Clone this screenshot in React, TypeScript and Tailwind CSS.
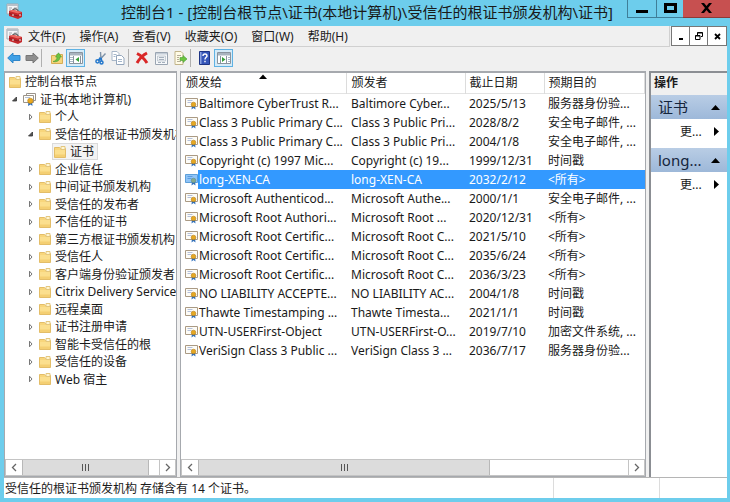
/**
 * Certificate console
 * Three panes: console tree, certificate list and actions.
 */
import type { ReactNode } from 'react';

const MENUS = ['文件(F)', '操作(A)', '查看(V)', '收藏夹(O)', '窗口(W)', '帮助(H)'];

const STORES = ['企业信任', '中间证书颁发机构', '受信任的发布者', '不信任的证书', '第三方根证书颁发机构', '受信任人', '客户端身份验证颁发者', 'Citrix Delivery Services', '远程桌面', '证书注册申请', '智能卡受信任的根', '受信任的设备', 'Web 宿主'];

const CERTS = [
    ['Baltimore CyberTrust R...', 'Baltimore Cyber...', '2025/5/13', '服务器身份验...'],
    ['Class 3 Public Primary C...', 'Class 3 Public Pri...', '2028/8/2', '安全电子邮件, ...'],
    ['Class 3 Public Primary C...', 'Class 3 Public Pri...', '2004/1/8', '安全电子邮件, ...'],
    ['Copyright (c) 1997 Mic...', 'Copyright (c) 19...', '1999/12/31', '时间戳'],
    ['long-XEN-CA', 'long-XEN-CA', '2032/2/12', '<所有>'],
    ['Microsoft Authenticod...', 'Microsoft Authe...', '2000/1/1', '安全电子邮件, ...'],
    ['Microsoft Root Authori...', 'Microsoft Root ...', '2020/12/31', '<所有>'],
    ['Microsoft Root Certific...', 'Microsoft Root C...', '2021/5/10', '<所有>'],
    ['Microsoft Root Certific...', 'Microsoft Root C...', '2035/6/24', '<所有>'],
    ['Microsoft Root Certific...', 'Microsoft Root C...', '2036/3/23', '<所有>'],
    ['NO LIABILITY ACCEPTE...', 'NO LIABILITY AC...', '2004/1/8', '时间戳'],
    ['Thawte Timestamping ...', 'Thawte Timesta...', '2021/1/1', '时间戳'],
    ['UTN-USERFirst-Object', 'UTN-USERFirst-O...', '2019/7/10', '加密文件系统, ...'],
    ['VeriSign Class 3 Public ...', 'VeriSign Class 3 ...', '2036/7/17', '服务器身份验...'],
];
const SELECTED = 4;

function ConsoleIcon() {
    return (
        <svg width="17" height="17" viewBox="0 0 17 17" className="shrink-0">
            <path d="M1 1h11v10H1z" fill="#f4f6f8" stroke="#a3a9b0" />
            <path d="M1 1h11v2H1z" fill="#b9c0c8" />
            <path d="M3 5h3M3 7h2M8 5h3" stroke="#a3a9b0" />
            <path d="M7 8V6.500q3-1.500 5 1v1" fill="none" stroke="#555" strokeWidth="1.200" />
            <path d="M3 8l4-1 9 2v5l-4 2-9-3z" fill="#c5292d" />
            <path d="M3 8l4-1 9 2-4 1.500z" fill="#ee6a62" />
            <path d="M3 10.500l9 2.500 4-2" stroke="#8e1b20" fill="none" />
            <path d="M7 11v2M14 11v2" stroke="#eee" />
        </svg>
    );
}

function FolderIcon() {
    return (
        <svg width="12" height="12" viewBox="0 0 12 12" className="shrink-0">
            <path d="M.5 1.500h5l1 1h5v9H.5z" fill="#f8d67c" stroke="#e3bd68" />
            <path d="M7 .5h4v3H7z" fill="#fff6d2" stroke="#e3c67f" />
            <path d="M1 4h10v7H1z" fill="#fbdf8e" />
            <path d="M1 8.500h10V11H1z" fill="#f4cf73" />
        </svg>
    );
}

function CertIcon({ active = false }: { active?: boolean }) {
    return (
        <svg width="13" height="13" viewBox="0 0 13 13" className="shrink-0">
            <path d="M.5 1.500h12v8H.5z" fill={active ? '#8fc4f7' : '#fdfcf7'} stroke={active ? '#5d9fd9' : '#aa9a84'} />
            <path d="M2.500 3.500h5M2.500 5.500h4" stroke={active ? '#5b9ce0' : '#b4c0da'} />
            <path d="M7 8l-.5 4.500L8.500 11l2 1.500L10 8z" fill="#2e6fbd" />
            <circle cx="8.500" cy="7.500" r="2.300" fill={active ? '#86aa8c' : '#e5a823'} stroke={active ? '#5d8c91' : '#b87d12'} strokeWidth=".6" />
        </svg>
    );
}

function CertStackIcon() {
    return (
        <svg width="13" height="13" viewBox="0 0 13 13" className="shrink-0">
            <path d="M3.500.5h9v7h-9z" fill="#fff" stroke="#9a938a" />
            <path d="M.5 2.500h10v7H.5z" fill="#fffef8" stroke="#9a938a" />
            <path d="M2 4.500h5" stroke="#b4c0da" />
            <path d="M5.500 8l-.5 5 2.500-1.500 2 1.500L9 8z" fill="#2e6fbd" />
            <circle cx="7.300" cy="7.800" r="2.600" fill="#eaa91f" stroke="#b87d12" strokeWidth=".6" />
        </svg>
    );
}

function Twisty({ open }: { open?: boolean }) {
    return (
        <svg width="7" height="8" viewBox="0 0 7 8" className="shrink-0">
            {open ? <path d="M5.500 2v4h-4z" fill="#555" stroke="#333" strokeWidth=".8" /> : <path d="M2.500 1.200L5 4 2.500 6.800z" fill="#fff" stroke="#777" />}
        </svg>
    );
}

function Arrow({ left }: { left?: boolean }) {
    return (
        <svg width="14" height="14" viewBox="0 0 14 14">
            {left ? (
                <path d="M.7 7L6 2V4.500h7v5H6V12z" fill="#3fa0e6" stroke="#2f86c9" />
            ) : (
                <path d="M13.300 7L8 2V4.500H1v5h7V12z" fill="#8e8e8e" stroke="#777" />
            )}
        </svg>
    );
}

function PaneIcon({ right }: { right?: boolean }) {
    return (
        <svg width="14" height="12" viewBox="0 0 14 12">
            <path d="M.5.5h13v11H.5z" fill="#fff" stroke="#8a949e" />
            <path d="M1 1h12v2.500H1z" fill="#a9b4bf" />
            {right ? (
                <>
                    <path d="M9.500 4v7M3.500 4v7" stroke="#8a949e" />
                    <path d="M11 5.500h2M11 7.500h2M11 9.500h2" stroke="#a9b8c8" />
                    <path d="M5 5l3.500 2.500L5 10z" fill="#36a03a" />
                </>
            ) : (
                <>
                    <path d="M4.500 4v7M11.500 4v7" stroke="#8a949e" />
                    <path d="M1 5.500h3M1 7.500h3M1 9.500h3" stroke="#a9b8c8" />
                    <path d="M10 5L6.500 7.500 10 10z" fill="#36a03a" />
                </>
            )}
        </svg>
    );
}

function Tool({ label, framed, children }: { label: string; framed?: boolean; children: ReactNode }) {
    return (
        <button aria-label={label} className={`flex h-[18px] shrink-0 items-center justify-center ${framed ? 'w-[19px] border border-[#5fb2e3] bg-[#d5ebf8]' : 'w-[18px]'}`}>
            {children}
        </button>
    );
}

function Divider() {
    return <span className="h-[18px] w-px shrink-0 bg-[#b0b0b0]" />;
}

function Toolbar() {
    return (
        <div className="flex h-[24px] items-center bg-[#f0f0f0] pb-[2px] pl-px">
            <Tool label="后退"><Arrow left /></Tool>
            <Tool label="前进"><Arrow /></Tool>
            <Divider />
            <div className="ml-[6px] flex">
                <Tool label="向上一级">
                    <svg width="12" height="13" viewBox="0 0 12 13">
                        <path d="M.5 3.500h4l1-1h6v9H.5z" fill="#f6d57c" stroke="#d6ad55" />
                        <path d="M2 9.500C4.500 9 6 7.500 6 5H4.500L7.500.8 10.500 5H9c0 3-2.500 5.500-7 4.500z" fill="#6cc43f" stroke="#4b9a35" strokeWidth=".6" />
                    </svg>
                </Tool>
                <Tool label="显示/隐藏控制台树" framed><PaneIcon /></Tool>
            </div>
            <div className="mr-px ml-[6px] flex">
                <Tool label="剪切">
                    <svg width="13" height="14" viewBox="0 0 13 14">
                        <path d="M6.500 1L7 9M11.500 2.500L5 9.500" stroke="#7f93a8" strokeWidth="1.400" />
                        <path d="M6.500 6.500L4.500 9.500M7 7l.5 3" stroke="#2478cc" strokeWidth="1.800" />
                        <circle cx="3.500" cy="10.300" r="1.600" fill="none" stroke="#2478cc" strokeWidth="1.500" />
                        <circle cx="7.500" cy="11.500" r="1.500" fill="none" stroke="#2478cc" strokeWidth="1.500" />
                    </svg>
                </Tool>
                <Tool label="复制">
                    <svg width="14" height="14" viewBox="0 0 14 14">
                        <path d="M1 .5h5l2 2v7H1z" fill="#fff" stroke="#a7b6c8" />
                        <path d="M5.500 4.500h5l2.500 2.500v6.500H5.500z" fill="#fff" stroke="#94a6bc" />
                        <path d="M2.500 3.500h3M2.500 5.500h2M7 8.500h4M7 10.500h4" stroke="#a5b7cb" />
                    </svg>
                </Tool>
            </div>
            <Divider />
            <div className="mr-px ml-1 flex gap-px">
                <Tool label="删除">
                    <svg width="14" height="14" viewBox="0 0 14 14">
                        <path d="M2 2.500Q8 5.500 12 12M12 2Q6 5 2 12" fill="none" stroke="#d92727" strokeWidth="3" />
                    </svg>
                </Tool>
                <Tool label="属性">
                    <svg width="13" height="13" viewBox="0 0 13 13">
                        <path d="M.5.5h12v12H.5z" fill="#f7f9fb" stroke="#9aa5b2" />
                        <path d="M1 1h11v1.500H1z" fill="#c3ccd6" />
                        <path d="M2.500 4h8v5h-8z" fill="#eef1f4" stroke="#b2bbc6" strokeWidth=".7" />
                        <path d="M4 5.500h5M4 7.500h5M3 10.500h3M7 10.500h3" stroke="#a5b0bd" />
                    </svg>
                </Tool>
                <Tool label="导出列表">
                    <svg width="13" height="14" viewBox="0 0 13 14">
                        <path d="M1 .5h6l2 2v11H1z" fill="#fffbe6" stroke="#c2b48a" />
                        <path d="M3 4.500h4M3 6.500h2M3 8.500h2M3 10.500h4" stroke="#b5ad99" />
                        <path d="M6 6.500h3V4.500L13 8l-4 3.500V9.500H6z" fill="#6cc63f" stroke="#4b9a35" strokeWidth=".6" />
                    </svg>
                </Tool>
            </div>
            <Divider />
            <div className="ml-1 flex gap-px">
                <Tool label="帮助">
                    <svg width="11" height="14" viewBox="0 0 11 14">
                        <path d="M.5.5h10v13H.5z" fill="#3555b8" stroke="#1d3484" />
                        <path d="M1 1h1.500v12H1z" fill="#8ba3e2" />
                        <path d="M4 5q0-2 2-2t2 2c0 1.300-2 1.500-2 3.500M6 9.800v1.500" fill="none" stroke="#fff" strokeWidth="1.400" />
                    </svg>
                </Tool>
                <Tool label="显示/隐藏操作窗格" framed><PaneIcon right /></Tool>
            </div>
        </div>
    );
}

function TreeRow({ label, indent, icon, toggle, selected }: { label: string; indent: string; icon?: ReactNode; toggle?: 'open' | 'closed'; selected?: boolean }) {
    return (
        <li className={`flex items-center odd:h-[17px] even:h-[18px] ${indent}`}>
            {toggle && <span className="mr-[5px]"><Twisty open={toggle === 'open'} /></span>}
            <span className={`flex h-[17px] items-center gap-1 whitespace-nowrap ${selected ? 'border border-[#dadada] bg-[#f3f3f3] pr-[3px] pl-px' : ''}`}>
                {icon ?? <FolderIcon />}
                {label}
            </span>
        </li>
    );
}

function ScrollBar({ thumb }: { thumb: string }) {
    return (
        <div className="flex h-[17px] shrink-0 border border-[#c4c4c4] bg-white">
            <button aria-label="向左滚动" className="flex w-4 items-center justify-center">
                <svg width="6" height="9" viewBox="0 0 6 9"><path d="M5 1L1.500 4.500 5 8" fill="none" stroke="#666" strokeWidth="1.300" /></svg>
            </button>
            <div className="flex flex-1">
                <div className={`flex items-center justify-center gap-[2px] border-x border-[#b8b8b8] bg-[#dcdcdc] ${thumb}`}>
                    <span className="h-[7px] w-px bg-[#555]" />
                    <span className="h-[7px] w-px bg-[#555]" />
                    <span className="h-[7px] w-px bg-[#555]" />
                </div>
            </div>
            <button aria-label="向右滚动" className="flex w-4 items-center justify-center border-l border-[#c4c4c4]">
                <svg width="6" height="9" viewBox="0 0 6 9"><path d="M1 1l3.500 3.500L1 8" fill="none" stroke="#666" strokeWidth="1.300" /></svg>
            </button>
        </div>
    );
}

function ActionGroup({ title }: { title: string }) {
    return (
        <section className="mb-[5px]">
            <h3 className="flex h-[24px] items-center justify-between bg-linear-to-b from-[#b9cde5] to-[#9db8d9] px-[7px] text-[15px] text-[#15253c]">
                {title}
                <svg width="9" height="5" viewBox="0 0 9 5"><path d="M0 5L4.500 0 9 5z" fill="#000" /></svg>
            </h3>
            <button className="flex h-[24px] w-full items-center justify-between pr-2 pl-[29px]">
                更...
                <svg width="5" height="9" viewBox="0 0 5 9"><path d="M0 0l5 4.500L0 9z" fill="#000" /></svg>
            </button>
        </section>
    );
}

export default function App() {
    return (
        <div className="flex min-h-screen flex-col bg-[#6dcdec] pr-[3px] pb-1 pl-1 font-['Noto_Sans','Noto_Sans_CJK_SC',sans-serif] text-[12px] leading-[17px] text-[#1a1a1a]">
            <header className="-mr-[3px] grid h-[26px] shrink-0 grid-cols-[1fr_auto_1fr] items-start">
                <span className="pt-[3px] pl-[2px]"><ConsoleIcon /></span>
                <h1 className="text-[15px] leading-[24px] whitespace-nowrap">控制台1 - [控制台根节点\证书(本地计算机)\受信任的根证书颁发机构\证书]</h1>
                <div className="flex h-[18px] justify-end">
                    <button aria-label="最小化" className="flex w-[29px] items-center justify-center border-b border-l border-[#3f7f99]">
                        <svg width="12" height="12" viewBox="0 0 12 12"><path d="M0 7h12v3H0z" fill="#000" /></svg>
                    </button>
                    <button aria-label="最大化" className="flex w-[27px] items-center justify-center border-b border-l border-[#3f7f99] pb-[2px]">
                        <svg width="13" height="10" viewBox="0 0 13 10"><path d="M1.500 1.500h10v7h-10z" fill="none" stroke="#000" strokeWidth="3" /></svg>
                    </button>
                    <button aria-label="关闭" className="flex w-[47px] items-center justify-center border-b border-[#8c3a38] bg-[#c75050] pb-[2px]">
                        <svg width="11" height="10" viewBox="0 0 11 10"><path d="M0 0h3l2.500 3L8 0h3L7 5l4 5H8L5.500 7 3 10H0l4-5z" fill="#000" /></svg>
                    </button>
                </div>
            </header>

            <div className="flex h-[21px] shrink-0 items-stretch bg-[#f0f0f0]">
                <nav className="flex flex-1 items-center gap-[5px] border-r border-b border-[#d0d0d0] pl-[2px]">
                    <ConsoleIcon />
                    <div className="flex gap-[14px]">
                        {MENUS.map((m) => (
                            <button key={m} className="whitespace-nowrap">{m}</button>
                        ))}
                    </div>
                </nav>
                <div className="ml-px flex h-5 divide-x divide-[#777] border border-[#777] bg-white">
                    <button aria-label="最小化子窗口" className="flex w-[18px] items-center justify-center">
                        <svg width="8" height="8" viewBox="0 0 8 8"><path d="M2 6h4v2H2z" fill="#000" /></svg>
                    </button>
                    <button aria-label="还原子窗口" className="flex w-[18px] items-center justify-center">
                        <svg width="8" height="8" viewBox="0 0 8 8"><path d="M2.500 3V.5h5v4H6M2.500 1h5M.5 3.500H5v4H.5zM.5 4H5" fill="none" stroke="#000" /></svg>
                    </button>
                    <button aria-label="关闭子窗口" className="flex w-[18px] items-center justify-center">
                        <svg width="7" height="7" viewBox="0 0 7 7"><path d="M1 1l5 5M6 1L1 6" stroke="#000" strokeWidth="1.800" /></svg>
                    </button>
                </div>
            </div>

            <Toolbar />

            <main className="flex flex-1 gap-[3px] bg-[#f0f0f0]">
                <aside className="flex w-[173px] shrink-0 flex-col overflow-hidden border border-t-2 border-[#a6a9ae] bg-white">
                    <ul className="flex-1">
                        <TreeRow label="控制台根节点" indent="pl-1" />
                        <TreeRow label="证书(本地计算机)" indent="pl-[6px]" icon={<CertStackIcon />} toggle="open" />
                        <TreeRow label="个人" indent="pl-[22px]" toggle="closed" />
                        <TreeRow label="受信任的根证书颁发机构" indent="pl-[22px]" toggle="open" />
                        <TreeRow label="证书" indent="pl-[47px]" selected />
                        {STORES.map((s) => (
                            <TreeRow key={s} label={s} indent="pl-[22px]" toggle="closed" />
                        ))}
                    </ul>
                    <ScrollBar thumb="w-[93%]" />
                </aside>

                <section className="flex min-w-0 flex-1 flex-col overflow-hidden border border-t-2 border-[#a6a9ae] bg-white">
                    <div className="flex-1">
                        <table className="w-full table-fixed border-collapse text-left whitespace-nowrap">
                            <colgroup>
                                <col className="w-[165px]" />
                                <col className="w-[119px]" />
                                <col className="w-[79px]" />
                                <col />
                            </colgroup>
                            <thead>
                                <tr className="h-[20px] border-b border-[#e3e3e3]">
                                    <th className="border-r border-[#dcdcdc] py-0 pl-[5px] font-normal">
                                        <span className="flex items-start gap-[37px]">
                                            颁发给
                                            <svg width="8" height="5" viewBox="0 0 8 5"><path d="M0 5l4-4.500L8 5z" fill="#000" /></svg>
                                        </span>
                                    </th>
                                    <th className="border-r border-[#dcdcdc] py-0 pl-[5px] font-normal">颁发者</th>
                                    <th className="border-r border-[#dcdcdc] py-0 pl-1 font-normal">截止日期</th>
                                    <th className="border-r border-[#dcdcdc] py-0 pl-1 font-normal">预期目的</th>
                                </tr>
                            </thead>
                            <tbody>
                                {CERTS.map(([subject, issuer, expires, purpose], i) => {
                                    const active = i === SELECTED;
                                    const cell = active ? 'bg-[#3399ff] text-white' : '';
                                    return (
                                        <tr key={i} className="h-[19px]">
                                            <td className="p-0">
                                                <div className="flex h-[19px] items-center pl-1">
                                                    <CertIcon active={active} />
                                                    <span className={`flex h-full flex-1 items-center pl-px ${cell}`}>{subject}</span>
                                                </div>
                                            </td>
                                            <td className={`py-0 pl-[5px] ${cell}`}>{issuer}</td>
                                            <td className={`py-0 pl-1 ${cell}`}>{expires}</td>
                                            <td className={`py-0 pl-1 ${cell}`}>{purpose}</td>
                                        </tr>
                                    );
                                })}
                            </tbody>
                        </table>
                    </div>
                    <ScrollBar thumb="w-[68%]" />
                </section>

                <aside className="flex w-[78px] shrink-0 flex-col border-t-2 border-l-2 border-[#8b8e93] bg-white">
                    <h2 className="h-[22px] bg-[#f0f0f0] pl-[3px] leading-[20px] font-bold">操作</h2>
                    <ActionGroup title="证书" />
                    <ActionGroup title="long..." />
                </aside>
            </main>

            <footer className="flex h-[21px] shrink-0 items-center border-t border-[#b5b5b5] bg-white pl-px">
                <span className="flex-1 whitespace-nowrap">受信任的根证书颁发机构 存储含有 14 个证书。</span>
                <span className="h-full w-[106px] border-l border-[#dcdcdc]" />
                <span className="h-full w-[68px] border-l border-[#dcdcdc]" />
            </footer>
        </div>
    );
}
